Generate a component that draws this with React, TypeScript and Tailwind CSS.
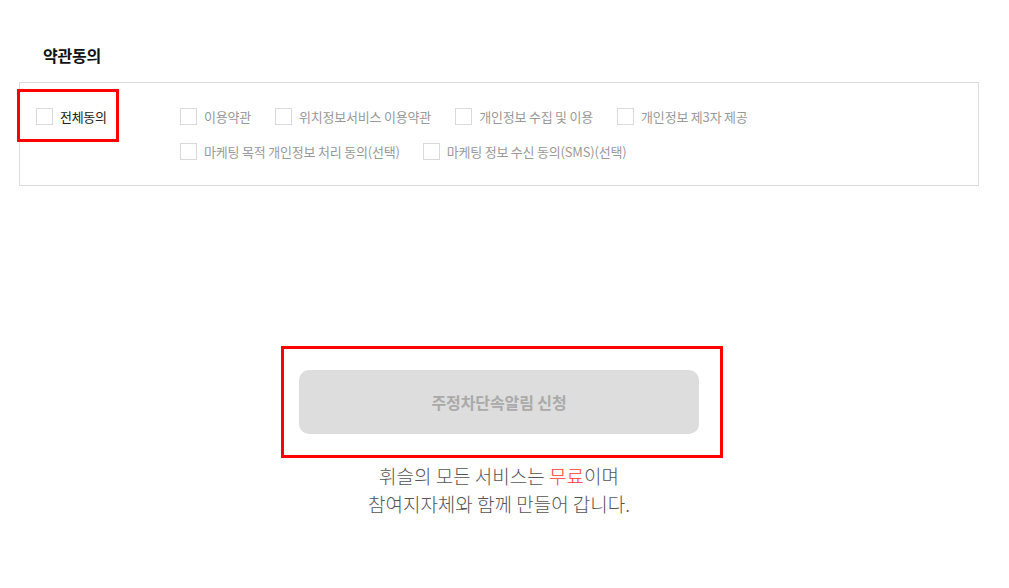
import React from "react";

const font = { fontFamily: '"Noto Sans CJK KR", "Noto Sans", sans-serif' };

function Check({ label, dark }: { label: string; dark?: boolean }) {
  return (
    <label className="flex items-center gap-[7px] whitespace-nowrap">
      <span className="block h-[17px] w-[17px] border border-[#d9d9d9] bg-white" />
      <span className={dark ? "text-[13px] text-[#222] tracking-[-0.3px]" : "text-[13px] text-[#999] tracking-[-0.2px]"}>{label}</span>
    </label>
  );
}

export default function App() {
  return (
    <div className="relative h-[588px] w-[1009px] bg-white" style={font}>
      <div className="px-[19px] pt-[44px]">
        <h2 className="pl-[24px] text-[16px] font-bold text-[#111] leading-[22px] tracking-[-0.2px]">약관동의</h2>
        <div className="mt-[16px] flex h-[104px] w-[960px] border border-[#dddddd] pl-[16px] pt-[24px]">
          <div className="w-[144px]">
            <Check label="전체동의" dark />
          </div>
          <div className="flex flex-col gap-[15px]">
            <div className="flex gap-[24px]">
              <Check label="이용약관" />
              <Check label="위치정보서비스 이용약관" />
              <Check label="개인정보 수집 및 이용" />
              <Check label="개인정보 제3자 제공" />
            </div>
            <div className="flex gap-[23px]">
              <Check label="마케팅 목적 개인정보 처리 동의(선택)" />
              <Check label="마케팅 정보 수신 동의(SMS)(선택)" />
            </div>
          </div>
        </div>
      </div>

      <div className="mt-[184px] flex flex-col items-center">
        <button className="ml-[-11px] flex h-[64px] w-[400px] items-center justify-center rounded-[10px] bg-[#dddddd] text-[16px] font-bold text-[#aaaaaa] tracking-[-0.1px]">
          주정차단속알림 신청
        </button>
        <div className="mt-[28px] ml-[-11px] text-center text-[19px] leading-[28px] text-[#555] font-light">
          <p>휘슬의 모든 서비스는 <span className="text-[#ff3b30]">무료</span>이며</p>
          <p>참여지자체와 함께 만들어 갑니다.</p>
        </div>
      </div>

      <div className="pointer-events-none absolute left-[17px] top-[89px] h-[53px] w-[102px] border-[3px] border-[#ff0000]" />
      <div className="pointer-events-none absolute left-[281px] top-[346px] h-[112px] w-[442px] border-[3px] border-[#ff0000]" />
    </div>
  );
}
